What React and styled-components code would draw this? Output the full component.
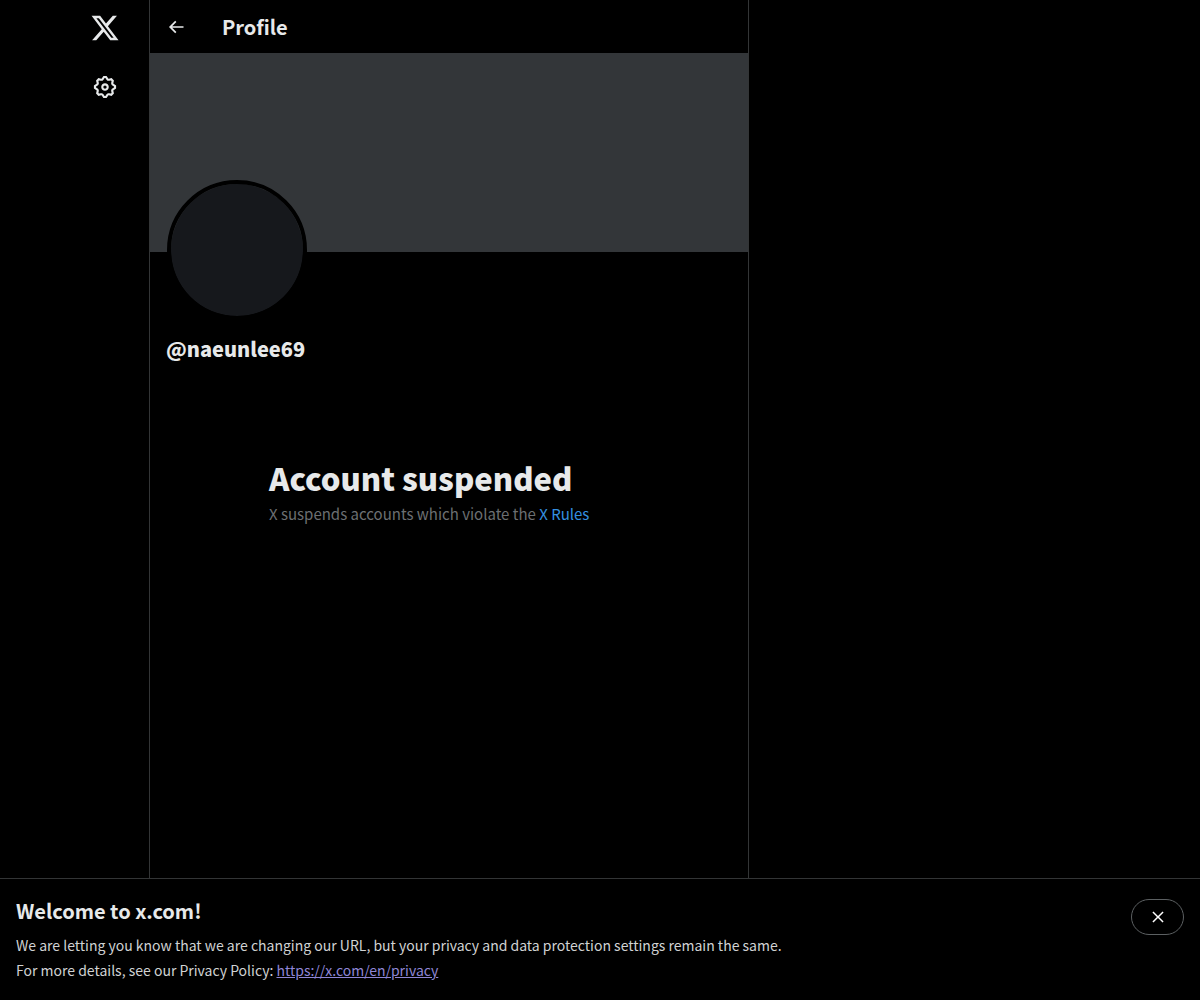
import styled, { createGlobalStyle } from 'styled-components';

const GlobalStyle = createGlobalStyle`
  * {
    box-sizing: border-box;
  }

  body {
    margin: 0;
    background-color: #000;
    color: #e7e9ea;
    font-family: "Noto Sans CJK JP", "Noto Sans CJK SC", sans-serif;
    font-size: 15px;
    line-height: 20px;
  }

  h1, h2, p {
    margin: 0;
  }
`;

const Page = styled.div`
  min-height: 100vh;
  display: flex;
  flex-direction: column;
`;

const Layout = styled.div`
  flex: 1;
  display: grid;
  grid-template-columns: minmax(88px, 149fr) minmax(0, 600px) 451fr;
`;

const Rail = styled.nav`
  display: flex;
  flex-direction: column;
  align-items: flex-end;
  gap: 7px;
  padding: 2px 18px 0 0;
`;

const RailLink = styled.a`
  display: flex;
  align-items: center;
  justify-content: center;
  width: 52px;
  height: 52px;
  border-radius: 50%;
  color: inherit;

  &:hover {
    background-color: #181919;
  }
`;

const Icon = styled.svg`
  display: block;
  width: ${({ $size }) => $size}px;
  height: ${({ $size }) => $size}px;
  fill: currentColor;
`;

const Column = styled.main`
  border: solid #333536;
  border-width: 0 1px;
`;

const TopBar = styled.header`
  display: flex;
  align-items: center;
  gap: 28px;
  height: 53px;
  padding: 0 8px;
`;

const BackButton = styled.button`
  display: flex;
  align-items: center;
  justify-content: center;
  width: 36px;
  height: 36px;
  padding: 0;
  border: 0;
  border-radius: 50%;
  background: none;
  color: inherit;
  cursor: pointer;
`;

const Title = styled.h2`
  font-size: 20px;
  font-weight: 700;
  line-height: 24px;
`;

const Banner = styled.div`
  aspect-ratio: 3 / 1;
  background-color: #333639;
`;

const ProfileInfo = styled.section`
  padding: 0 16px 12px;
`;

const Avatar = styled.div`
  width: 140px;
  height: 140px;
  margin: -72px 1px 0;
  border: 4px solid #000;
  border-radius: 50%;
  background-color: #16181c;
  background-clip: padding-box;
`;

const Handle = styled.h2`
  margin-top: 17px;
  font-size: 20px;
  font-weight: 800;
  line-height: 24px;
`;

const EmptyState = styled.section`
  display: flex;
  flex-direction: column;
  gap: 8px;
  max-width: 400px;
  margin: 71px auto 32px;
  padding: 16px 20px;
`;

const EmptyTitle = styled.h1`
  font-size: 31px;
  font-weight: 800;
  line-height: 36px;
`;

const EmptyText = styled.p`
  color: #6c6f72;
`;

const RulesLink = styled.a`
  color: #3490e0;
  text-decoration: none;

  &:hover {
    text-decoration: underline;
  }
`;

const Notice = styled.aside`
  display: flex;
  justify-content: space-between;
  align-items: flex-start;
  gap: 16px;
  padding: 20px 16px 17px;
  border-top: 1px solid #333536;
`;

const NoticeBody = styled.div`
  display: flex;
  flex-direction: column;
  gap: 10px;
`;

const NoticeText = styled.p`
  color: #d0d2d3;
  font-size: 14px;
  line-height: 25px;
`;

const PrivacyLink = styled.a`
  color: #8f86d6;
`;

const CloseButton = styled.button`
  display: flex;
  align-items: center;
  justify-content: center;
  flex-shrink: 0;
  width: 53px;
  height: 36px;
  padding: 0;
  border: 1px solid #5c6062;
  border-radius: 18px;
  background: none;
  color: #fff;
  cursor: pointer;
`;

const paths = {
  logo: 'M18.244 2.25h3.308l-7.227 8.26 8.502 11.24H16.17l-5.214-6.817L4.99 21.75H1.68l7.73-8.835L1.254 2.25H8.08l4.713 6.231zm-1.161 17.52h1.833L7.084 4.126H5.117z',
  settings: 'M10.54 1.75h2.92l1.57 2.36c.11.17.32.25.53.21l2.53-.59 2.17 2.17-.58 2.54c-.05.2.04.41.21.53l2.36 1.57v2.92l-2.36 1.57c-.17.12-.26.33-.21.53l.58 2.54-2.17 2.17-2.53-.59c-.21-.04-.42.04-.53.21l-1.57 2.36h-2.92l-1.58-2.36c-.11-.17-.32-.25-.52-.21l-2.54.59-2.17-2.17.58-2.54c.05-.2-.03-.41-.21-.53l-2.35-1.57v-2.92L4.1 8.97c.18-.12.26-.33.21-.53L3.73 5.9 5.9 3.73l2.54.59c.2.04.41-.04.52-.21l1.58-2.36zm1.07 2l-.98 1.47C10.05 6.08 9 6.5 7.99 6.27l-1.46-.34-.6.6.33 1.46c.24 1.01-.18 2.07-1.05 2.64l-1.46.98v.78l1.46.98c.87.57 1.29 1.63 1.05 2.64l-.33 1.46.6.6 1.46-.34c1.01-.23 2.06.19 2.64 1.05l.98 1.47h.78l.97-1.47c.58-.86 1.63-1.28 2.65-1.05l1.45.34.61-.6-.34-1.46c-.23-1.01.18-2.07 1.05-2.64l1.47-.98v-.78l-1.47-.98c-.87-.57-1.28-1.63-1.05-2.64l.34-1.46-.61-.6-1.45.34c-1.02.23-2.07-.19-2.65-1.05l-.97-1.47h-.78zM12 10.5c-.83 0-1.5.67-1.5 1.5s.67 1.5 1.5 1.5c.82 0 1.5-.67 1.5-1.5s-.68-1.5-1.5-1.5zM8.5 12c0-1.93 1.56-3.5 3.5-3.5 1.93 0 3.5 1.57 3.5 3.5s-1.57 3.5-3.5 3.5c-1.94 0-3.5-1.57-3.5-3.5z',
  back: 'M7.414 13l5.043 5.04-1.414 1.42L3.586 12l7.457-7.46 1.414 1.42L7.414 11H21v2H7.414z',
  close: 'M10.59 12L4.54 5.96l1.42-1.42L12 10.59l6.04-6.05 1.42 1.42L13.41 12l6.05 6.04-1.42 1.42L12 13.41l-6.04 6.05-1.42-1.42L10.59 12z',
};

function Glyph({ name, size }) {
  return (
    <Icon viewBox="0 0 24 24" $size={size} aria-hidden="true">
      <path d={paths[name]} />
    </Icon>
  );
}

export default function App() {
  return (
    <>
      <GlobalStyle />
      <Page>
        <Layout>
          <Rail aria-label="Primary">
            <RailLink href="#home" aria-label="X">
              <Glyph name="logo" size={30} />
            </RailLink>
            <RailLink href="#settings" aria-label="Settings">
              <Glyph name="settings" size={26} />
            </RailLink>
          </Rail>
          <Column>
            <TopBar>
              <BackButton type="button" aria-label="Back">
                <Glyph name="back" size={20} />
              </BackButton>
              <Title>Profile</Title>
            </TopBar>
            <Banner />
            <ProfileInfo>
              <Avatar />
              <Handle>@naeunlee69</Handle>
            </ProfileInfo>
            <EmptyState>
              <EmptyTitle>Account suspended</EmptyTitle>
              <EmptyText>
                X suspends accounts which violate the <RulesLink href="#rules">X Rules</RulesLink>
              </EmptyText>
            </EmptyState>
          </Column>
        </Layout>
        <Notice aria-label="Welcome to x.com!">
          <NoticeBody>
            <Title>Welcome to x.com!</Title>
            <NoticeText>
              We are letting you know that we are changing our URL, but your privacy and data protection settings remain the same.
              <br />
              For more details, see our Privacy Policy: <PrivacyLink href="https://x.com/en/privacy">https://x.com/en/privacy</PrivacyLink>
            </NoticeText>
          </NoticeBody>
          <CloseButton type="button" aria-label="Close">
            <Glyph name="close" size={18} />
          </CloseButton>
        </Notice>
      </Page>
    </>
  );
}
